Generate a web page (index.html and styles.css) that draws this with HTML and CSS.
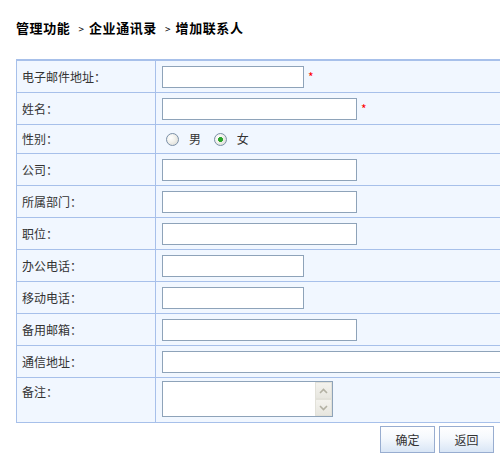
FILE: index.html
```html
<!DOCTYPE html>
<html lang="zh-CN">
<head>
<meta charset="utf-8">
<title>增加联系人</title>
<link rel="stylesheet" href="styles.css">
</head>
<body>
<div class="page">
  <h1 class="crumb">管理功能<span class="gt">&gt;</span>企业通讯录<span class="gt">&gt;</span>增加联系人</h1>
  <div class="tablewrap">
    <table class="form">
      <tr class="first"><th>电子邮件地址：</th><td><input class="field w-s" type="text"><span class="req">*</span></td></tr>
      <tr><th>姓名：</th><td><input class="field w-m" type="text"><span class="req">*</span></td></tr>
      <tr class="radio-row"><th>性别：</th><td>
        <label class="opt"><input type="radio" name="sex" class="rd">男</label>
        <label class="opt"><input type="radio" name="sex" class="rd" checked>女</label>
      </td></tr>
      <tr><th>公司：</th><td><input class="field w-m" type="text"></td></tr>
      <tr><th>所属部门：</th><td><input class="field w-m" type="text"></td></tr>
      <tr><th>职位：</th><td><input class="field w-m" type="text"></td></tr>
      <tr><th>办公电话：</th><td><input class="field w-s" type="text"></td></tr>
      <tr><th>移动电话：</th><td><input class="field w-s" type="text"></td></tr>
      <tr><th>备用邮箱：</th><td><input class="field w-m" type="text"></td></tr>
      <tr><th>通信地址：</th><td><input class="field w-l" type="text"></td></tr>
      <tr class="memo-row"><th>备注：</th><td>
        <div class="memo">
          <textarea class="memo-text"></textarea>
          <div class="sb">
            <span class="sb-btn"><svg width="9" height="6" viewBox="0 0 9 6"><path d="M1 5 L4.5 1.5 L8 5" fill="none" stroke="#b3b1a3" stroke-width="1.6"/></svg></span>
            <span class="sb-btn"><svg width="9" height="6" viewBox="0 0 9 6"><path d="M1 1 L4.5 4.5 L8 1" fill="none" stroke="#b3b1a3" stroke-width="1.6"/></svg></span>
          </div>
        </div>
      </td></tr>
    </table>
  </div>
  <div class="actions">
    <button class="btn" type="button">确定</button>
    <button class="btn" type="button">返回</button>
  </div>
</div>
</body>
</html>
```
FILE: styles.css
```css
html, body {
  margin: 0;
  background: #fff;
  overflow: hidden;
}
body {
  font-family: "Noto Sans CJK SC", "Noto Sans", sans-serif;
  font-size: 12px;
  color: #333;
}
.page {
  padding: 19px 0 0 16px;
}
.crumb {
  margin: 0;
  font-size: 13px;
  font-weight: bold;
  line-height: 18px;
  color: #000;
  letter-spacing: 0.6px;
}
.crumb .gt {
  font-weight: normal;
  font-size: 10px;
  margin: 0 5px 0 8px;
  letter-spacing: 0;
}
.tablewrap {
  margin-top: 21px;
  overflow: hidden;
}
.form {
  border-collapse: collapse;
  width: 580px;
}
.form th,
.form td {
  border: 1px solid #a7c0ea;
  background: #f1f7ff;
  padding: 5px 0 4px 6px;
  vertical-align: top;
  line-height: 22px;
  text-align: left;
  font-weight: normal;
  white-space: nowrap;
}
.form th {
  width: 133px;
  padding-left: 5px;
}
.form .first th,
.form .first td {
  border-top-width: 2px;
}
.field {
  box-sizing: border-box;
  height: 22px;
  margin: 0;
  padding: 0 2px;
  border: 1px solid #8ea3b9;
  background: #fff;
  font: inherit;
  vertical-align: top;
  outline: none;
}
.w-s { width: 142px; }
.w-m { width: 195px; }
.w-l { width: 420px; }
.req {
  color: #f00;
  margin-left: 4px;
}
.radio-row th,
.radio-row td {
  padding-top: 3px;
  padding-bottom: 3px;
}
.opt {
  display: inline-flex;
  align-items: center;
  margin-right: 8px;
  vertical-align: top;
  height: 22px;
}
.rd {
  appearance: none;
  -webkit-appearance: none;
  width: 13px;
  height: 13px;
  margin: 0 10px 0 4px;
  border: 1px solid #7b90a8;
  border-radius: 50%;
  background: radial-gradient(circle at 35% 35%, #ffffff 0, #f2f2ee 40%, #d6d6cf 100%);
  box-sizing: border-box;
}
.rd:checked {
  background:
    radial-gradient(circle, #2aa52a 0, #2aa52a 2.2px, transparent 2.8px),
    radial-gradient(circle at 35% 35%, #ffffff 0, #f2f2ee 40%, #d6d6cf 100%);
}
.opt + .opt .rd {
  margin-left: 2px;
}
.memo-row th,
.memo-row td {
  padding-top: 3px;
  padding-bottom: 5px;
}
.memo {
  display: inline-flex;
  box-sizing: border-box;
  width: 171px;
  height: 36px;
  border: 1px solid #8ea3b9;
  background: #fff;
  vertical-align: top;
}
.memo-text {
  flex: 1;
  min-width: 0;
  border: 0;
  margin: 0;
  padding: 2px;
  resize: none;
  outline: none;
  overflow: hidden;
  font: inherit;
  background: #fff;
}
.sb {
  width: 17px;
  display: flex;
  flex-direction: column;
}
.sb-btn {
  flex: 1;
  display: flex;
  align-items: center;
  justify-content: center;
  background: linear-gradient(#f4f3ee, #e7e6df);
  border: 1px solid #e2e1d9;
}
.actions {
  width: 478px;
  display: flex;
  justify-content: flex-end;
  gap: 4px;
  margin-top: 3px;
}
.btn {
  box-sizing: border-box;
  width: 55px;
  height: 27px;
  padding: 0;
  border: 1px solid #98add0;
  background: linear-gradient(#ffffff 0, #f4f8fd 45%, #d9e6f6 100%);
  font: inherit;
  color: #333;
}
```
